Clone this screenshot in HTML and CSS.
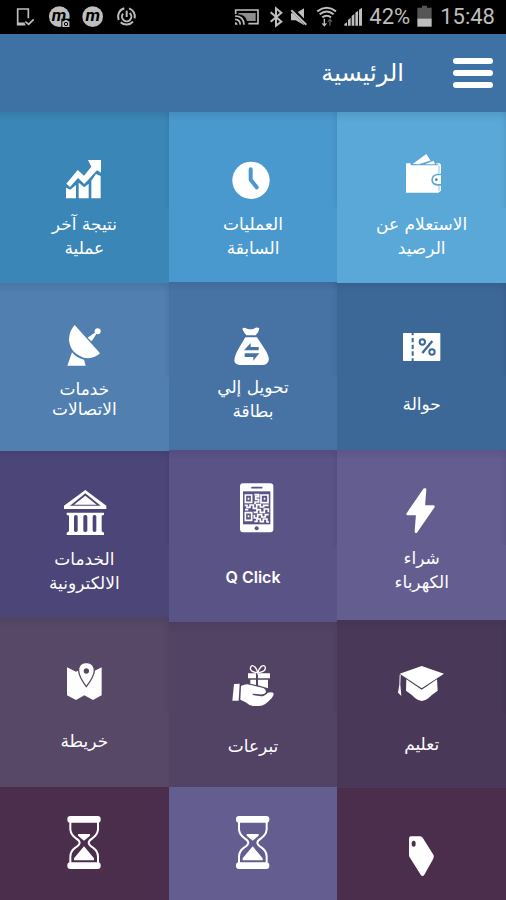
FILE: index.html
```html
<!DOCTYPE html>
<html lang="ar" dir="rtl">
<head>
<meta charset="utf-8">
<meta name="viewport" content="width=device-width, initial-scale=1">
<title>الرئيسية</title>
<link rel="stylesheet" href="styles.css">
</head>
<body>
<div class="status" dir="ltr">
  <div class="status-group status-group--left">
    <svg width="20" height="24" viewBox="45 15 60 72" aria-hidden="true"><path d="M76 74H53V27H85V55M53 70H74M76 65L86 73L101 58" fill="none" stroke="currentColor" stroke-width="5"/></svg>
    <svg width="20" height="24" viewBox="147 15 60 72" aria-hidden="true"><circle cx="178" cy="50" r="31" fill="currentColor"/><text class="badge-letter" x="177" y="64" text-anchor="middle">m</text><path d="M184 56H211V84H184Z" fill="#000"/><path d="M187 64H192L195 60H201L204 64H208V81H187Z" fill="currentColor"/><circle cx="198" cy="72" r="5" fill="none" stroke="#000" stroke-width="3"/></svg>
    <svg width="20" height="24" viewBox="249 15 60 72" aria-hidden="true"><circle cx="278" cy="50" r="31" fill="currentColor"/><text class="badge-letter" x="278" y="64" text-anchor="middle">m</text></svg>
    <svg width="20" height="24" viewBox="351 15 60 72" aria-hidden="true"><g fill="none" stroke="currentColor"><path d="M387 25A26 26 0 0 1 404 55M399 65A26 26 0 0 1 362 67M356 60A26 26 0 0 1 373 25" stroke-width="6"/><path d="M389 39A14 14 0 1 1 369 41" stroke-width="6"/><path d="M380 32V51" stroke-width="6"/></g></svg>
  </div>
  <div class="status-group">
    <svg width="28" height="24" viewBox="-57 15 84 72" aria-hidden="true"><path d="M-47 39H5V63H-21Q-27 43-47 43Z" fill="currentColor" opacity=".75"/><g fill="none" stroke="currentColor" stroke-width="5"><path d="M-55 42V30H12V71H-17"/><path d="M-57 48Q-31 48-30 74M-57 58Q-42 58-41 74"/></g><path d="M-57 66Q-50 67-49 74H-57Z" fill="currentColor"/></svg>
    <svg width="14" height="24" viewBox="46 15 42 72" aria-hidden="true"><path d="M51 37L83 65L67 77V25L83 38L51 65" fill="none" stroke="currentColor" stroke-width="6"/></svg>
    <svg width="20" height="24" viewBox="108 15 60 72" aria-hidden="true"><path d="M114 40H128L153 25V75L128 61H114Z" fill="currentColor"/><path d="M117 27L162 73" stroke="#000" stroke-width="12"/><path d="M115 31L160 74" stroke="currentColor" stroke-width="6"/></svg>
    <svg width="22" height="24" viewBox="186 15 66 72" aria-hidden="true"><g fill="none" stroke="currentColor" stroke-width="6"><path d="M193 34Q221 13 249 34M200 43Q221 26 242 43M208 52Q221 42 234 52"/><path d="M214 56V76M208 70L214 77L220 70" stroke-width="4"/><path d="M231 77V59M225 65L231 58L237 65" stroke-width="4" opacity=".45"/></g></svg>
    <svg width="20" height="24" viewBox="272 15 60 72" aria-hidden="true"><path d="M276 77V72L284 67V77ZM287 77V60L295 53V77ZM298 77V48L306 42V77ZM309 77V38L317 32V77ZM320 77V29L329 23V77Z" fill="currentColor"/></svg>
    <span>42%</span>
    <svg width="18" height="24" viewBox="483 15 54 72" aria-hidden="true"><path d="M487 23H501V17H516V23H530V57H487Z" fill="#555"/><path d="M487 56H530V80H487Z" fill="currentColor"/></svg>
    <span>15:48</span>
  </div>
</div>
<header class="header">
  <button class="menu" type="button" aria-label="القائمة"><span class="bar"></span><span class="bar"></span><span class="bar"></span></button>
  <h1 class="title">الرئيسية</h1>
</header>
<main class="board">
  <div class="lane lane--right">
    <button class="tile row1 sky" type="button">
      <svg class="icon" viewBox="435 138 144 144" aria-hidden="true"><g fill="#fff"><path d="M479 162L520 132L533 152L501 163ZM516 163L542 152L546 163Z"/><path d="M459 160H473V166H556V163H550V160H560L564 164V191H553Q535 194 535 210Q535 226 553 227H564V242L556 248H459Z"/><path d="M564 196H553Q540 198 540 210Q540 221 553 222H564Z"/></g><path d="M499 163L532 153L542 151" fill="none" stroke="#5aa8d8" stroke-width="2"/><circle cx="550" cy="209" r="4" fill="#3f82b3"/><path d="M558 168V190M558 228V243" stroke="#5aa8d8" stroke-width="2"/></svg>
      <span class="label">الاستعلام عن<br>الرصيد</span>
    </button>
    <button class="tile row2 steel" type="button">
      <svg class="icon" viewBox="435 129 144 144" aria-hidden="true"><rect x="450" y="159" width="112" height="84" rx="2" fill="#fff"/><path d="M479 159V166M479 174V187M479 194V207M479 214V227M479 235V243" fill="none" stroke="#3c6898" stroke-width="6"/><g fill="none" stroke="#3c6898" stroke-width="6"><circle cx="508" cy="186" r="8"/><circle cx="537" cy="216" r="8"/><path d="M538 183L508 219" stroke-width="7"/></g></svg>
      <span class="label label--single">حوالة</span>
    </button>
    <button class="tile row3 violet" type="button">
      <svg class="icon" viewBox="435 123 144 144" aria-hidden="true"><path d="M514 134L464 207H493L489 260L541 185H512L516 134Z" fill="#fff" stroke="#fff" stroke-width="8" stroke-linejoin="round"/></svg>
      <span class="label">شراء<br>الكهرباء</span>
    </button>
    <button class="tile row4 aubergine" type="button">
      <svg class="icon" viewBox="435 150 144 144" aria-hidden="true"><g fill="#fff"><path d="M506 168L573 191L506 235L440 191Z"/><path d="M460 208L506 239L552 208L554 242Q536 254 526 265Q506 281 487 265Q477 254 459 242Z"/><path d="M440 194H443L442 224L445 258L439 252L435 248L439 224Z"/></g></svg>
      <span class="label label--single">تعليم</span>
    </button>
    <button class="tile row5 row5--low plum" type="button" aria-label="عروض">
      <svg class="icon" viewBox="1194 171 144 144" aria-hidden="true"><path d="M1233 184H1260Q1266 184 1269 190L1301 241Q1303 247 1299 253L1273 299Q1268 307 1262 299L1229 247Q1227 244 1227 239V191Q1227 184 1233 184Z" fill="#fff"/><ellipse cx="1241" cy="206" rx="6" ry="9" fill="#4a2e4b"/></svg>
    </button>
  </div>
  <div class="lane lane--middle">
    <button class="tile row1 azure" type="button">
      <svg class="icon" viewBox="-72 138 144 144" aria-hidden="true"><circle cx="-6" cy="211" r="56" fill="#fff"/><path d="M-7 178V209L11 232" fill="none" stroke="#4a99ce" stroke-width="12" stroke-linecap="round" stroke-linejoin="round"/></svg>
      <span class="label">العمليات<br>السابقة</span>
    </button>
    <button class="tile row2 denim" type="button">
      <svg class="icon" viewBox="-72 126 144 144" aria-hidden="true"><g fill="#fff"><path d="M-32 146Q-27 140-18 146Q-6 150 3 146Q12 139 19 145Q18 157 8 166H-20Q-28 158-32 146Z"/><path d="M-23 172H12L39 213Q52 237 45 246Q40 255 29 255H-40Q-54 254-56 243Q-56 232-51 221Q-42 203-23 172Z"/></g><g fill="#4673a4"><path d="M-27 211L-7 189V201H17V211Z"/><path d="M-25 220H19L1 242V231H-25Z"/></g></svg>
      <span class="label">تحويل إلي<br>بطاقة</span>
    </button>
    <button class="tile row3 iris" type="button">
      <svg class="icon" viewBox="-72 123 144 144" aria-hidden="true"><rect x="-39" y="115" width="100" height="147" rx="9" fill="#fff"/><path d="M-30 139H52V238H-30Z" fill="#5a5386"/><path d="M-3 128H26" stroke="#5a5386" stroke-width="5" stroke-linecap="round"/><circle cx="11" cy="250" r="6" fill="#5a5386"/><g fill="none" stroke="#fff" stroke-width="5"><path d="M-23 150H-4V172H-23ZM24 150H45V173H24ZM-23 203H-4V226H-23Z"/><path d="M4 149H17V155H8V163H17V171H6V178M-25 181H-18V187H-9V180H1V190H11V179H22V186H32V181H47M-24 194H-14M2 202H12V194H22V202H34V192H46V202M4 209V219H14V209H26V216H37V209H47M4 229H12V222H22V230H31V222H42V231H48"/></g><path d="M-16 158H-11V164H-16ZM32 158H37V164H32ZM-16 211H-11V217H-16Z" fill="#fff"/></svg>
      <span class="label label--single label--latin" dir="ltr" lang="en">Q Click</span>
    </button>
    <button class="tile row4 grape" type="button">
      <svg class="icon" viewBox="-72 156 144 144" aria-hidden="true"><g fill="none" stroke="#fff" stroke-width="4"><path d="M14 188Q-8 187-8 175Q-5 161 6 171Q12 178 14 188Q18 176 24 170Q37 162 37 175Q36 186 14 188"/></g><g fill="#fff"><path d="M-15 190H9V205H-15ZM15 190H51V205H15ZM-8 209H9V225L-8 221ZM15 209H45V235L15 226Z"/><path d="M-57 222L-40 221L-43 272H-62Z"/><path d="M-36 228Q-23 221-9 224L31 234Q41 239 38 248Q33 255 18 253L-1 251V255L24 259Q34 259 45 248Q59 244 62 251Q62 259 51 269Q36 287 19 288H0Q-13 286-22 277L-38 269Z"/></g></svg>
      <span class="label label--single">تبرعات</span>
    </button>
    <button class="tile row5 violet" type="button" aria-label="قريبا">
      <svg class="icon" viewBox="687 132 144 144" aria-hidden="true"><g transform="translate(506 0)"><rect x="202" y="123" width="100" height="20" rx="9" fill="#fff"/><rect x="202" y="262" width="100" height="20" rx="9" fill="#fff"/><path d="M211 141V164Q213 180 228 190Q239 197 239 203Q239 209 226 218Q211 229 211 245V264M294 141V164Q292 180 277 190Q266 197 266 203Q266 209 279 218Q294 229 294 245V264" fill="none" stroke="#fff" stroke-width="6"/><path d="M234 177H270V182L252 197L234 182ZM252 214L282 250V256H222V250Z" fill="#fff"/></g></svg>
    </button>
  </div>
  <div class="lane lane--left">
    <button class="tile row1 teal" type="button">
      <svg class="icon" viewBox="180 138 144 144" aria-hidden="true"><g fill="#fff"><path d="M199 221L233 180L252 197L274 170L264 150H303V188L291 181L253 222L234 204L210 231Z"/><path d="M198 233L211 239L228 225V265H198ZM236 218L253 232L266 221V265H236ZM274 212L288 192L302 198V265H274Z"/></g></svg>
      <span class="label">نتيجة آخر<br>عملية</span>
    </button>
    <button class="tile row2 slate" type="button">
      <svg class="icon" viewBox="180 129 144 144" aria-hidden="true"><g fill="#fff"><path d="M224 135L300 220Q281 239 251 233Q211 220 207 181Q207 153 224 135Z"/><path d="M216 217Q230 235 252 239L257 257H202Z"/><path d="M263 173L284 158L289 162L276 182L272 182Z"/><circle cx="293" cy="154" r="9"/></g></svg>
      <span class="label label--tight">خدمات<br>الاتصالات</span>
    </button>
    <button class="tile row3 indigo" type="button">
      <svg class="icon" viewBox="180 126 144 144" aria-hidden="true"><path d="M256 135L319 182V192H192V182ZM200 203H312V209L305 212V259L312 263V270H200V263L207 259V212L200 209Z" fill="#fff"/><path d="M256 145L302 182H210Z" fill="#4c4577"/><path d="M256 152L290 179H222Z" fill="#fff"/><g fill="#4c4577"><rect x="222" y="210" width="11" height="51" rx="5"/><rect x="250" y="210" width="12" height="51" rx="5"/><rect x="278" y="210" width="11" height="51" rx="5"/></g></svg>
      <span class="label">الخدمات<br>الالكترونية</span>
    </button>
    <button class="tile row4 mauve" type="button">
      <svg class="icon" viewBox="180 141 144 144" aria-hidden="true"><path d="M201 172L228 185L252 173L278 185L305 172V256L279 270L253 256L228 270L201 256Z" fill="#fff"/><path d="M259 157Q284 159 283 183Q281 201 259 230Q237 201 236 183Q234 159 259 157Z" fill="#fff" stroke="#564866" stroke-width="4"/><circle cx="259" cy="183" r="8" fill="#564866"/></svg>
      <span class="label label--single">خريطة</span>
    </button>
    <button class="tile row5 plum" type="button" aria-label="قريبا">
      <svg class="icon" viewBox="180 132 144 144" aria-hidden="true"><rect x="202" y="123" width="100" height="20" rx="9" fill="#fff"/><rect x="202" y="262" width="100" height="20" rx="9" fill="#fff"/><path d="M211 141V164Q213 180 228 190Q239 197 239 203Q239 209 226 218Q211 229 211 245V264M294 141V164Q292 180 277 190Q266 197 266 203Q266 209 279 218Q294 229 294 245V264" fill="none" stroke="#fff" stroke-width="6"/><path d="M234 177H270V182L252 197L234 182ZM252 214L282 250V256H222V250Z" fill="#fff"/></svg>
    </button>
  </div>
</main>
</body>
</html>
```
FILE: styles.css
```css
* { box-sizing: border-box; }

body {
  margin: 0;
  min-height: 100vh;
  display: flex;
  flex-direction: column;
  background: #4a2e4b;
  color: #fff;
  font-family: "DejaVu Sans", "Noto Sans", sans-serif;
}

button {
  border: 0;
  margin: 0;
  color: inherit;
  font: inherit;
  cursor: pointer;
}

/* Status bar */
.status {
  display: flex;
  justify-content: space-between;
  align-items: center;
  height: 34px;
  padding: 0 11px 0 15px;
  background: #000;
  color: #bebebe;
  font-family: Roboto, sans-serif;
  font-size: 22px;
  line-height: 34px;
}

.status-group {
  display: flex;
  align-items: center;
  gap: 6px;
}

.status-group--left { gap: 14px; }

.status svg {
  display: block;
  overflow: visible;
}

.badge-letter {
  fill: #000;
  font: italic 700 52px Roboto, sans-serif;
}

/* Header */
.header {
  display: flex;
  align-items: center;
  gap: 49px;
  height: 78px;
  padding: 0 13px;
  background: #3f72a4;
}

.menu {
  display: flex;
  flex-direction: column;
  gap: 6px;
  width: 40px;
  padding: 0;
  background: none;
}

.bar {
  height: 6px;
  border-radius: 3px;
  background: #fff;
}

.title {
  margin: 0;
  font-size: 24px;
  line-height: 32px;
  font-weight: 400;
}

/* Tiles */
.board {
  flex: 1;
  display: grid;
  grid-template-columns: repeat(3, 1fr);
}

.lane { display: grid; }
.lane--right { grid-template-rows: 171px 167px 170px 168px minmax(112px, 1fr); }
.lane--middle { grid-template-rows: 170px 168px 172px 165px minmax(113px, 1fr); }
.lane--left { grid-template-rows: 171px 168px 166px 170px minmax(113px, 1fr); }

.tile {
  display: flex;
  flex-direction: column;
  align-items: center;
  padding: 40px 8px 0;
  background-image:
    linear-gradient(to left, rgba(20, 30, 60, .07), transparent),
    linear-gradient(to bottom, rgba(20, 30, 60, .1), transparent);
  background-size: 6px 56%, 100% 10px;
  background-position: right top, left top;
  background-repeat: no-repeat;
}

.icon {
  display: block;
  flex: none;
  width: 48px;
  height: 48px;
  overflow: visible;
}

.label {
  font-size: 17px;
  line-height: 24px;
  text-align: center;
}

.label--latin {
  font-family: Inter, sans-serif;
  font-size: 16px;
  font-weight: 600;
}

.row1 { padding-top: 44px; }
.row1 .label { margin-top: 8px; }
.row2 .label { margin-top: 5px; }
.row2 .label--single { margin-top: 21px; }
.row2 .label--tight { margin-top: 8px; line-height: 20px; }
.row3 { padding-top: 36px; }
.row3 .label { margin-top: 12px; }
.row3 .label--single { margin-top: 31px; }
.row4 .label { margin-top: 24px; }
.row5 { padding-top: 32px; background-image: none; }
.row5--low { padding-top: 44px; }

.sky { background-color: #5aa8d8; }
.azure { background-color: #4a99ce; }
.teal { background-color: #3a87b7; }
.steel { background-color: #3c6898; }
.denim { background-color: #4673a4; }
.slate { background-color: #507fb0; }
.violet { background-color: #645d90; }
.iris { background-color: #5a5386; }
.indigo { background-color: #4c4577; }
.aubergine { background-color: #493858; }
.grape { background-color: #524264; }
.mauve { background-color: #564866; }
.plum { background-color: #4a2e4b; }
```
